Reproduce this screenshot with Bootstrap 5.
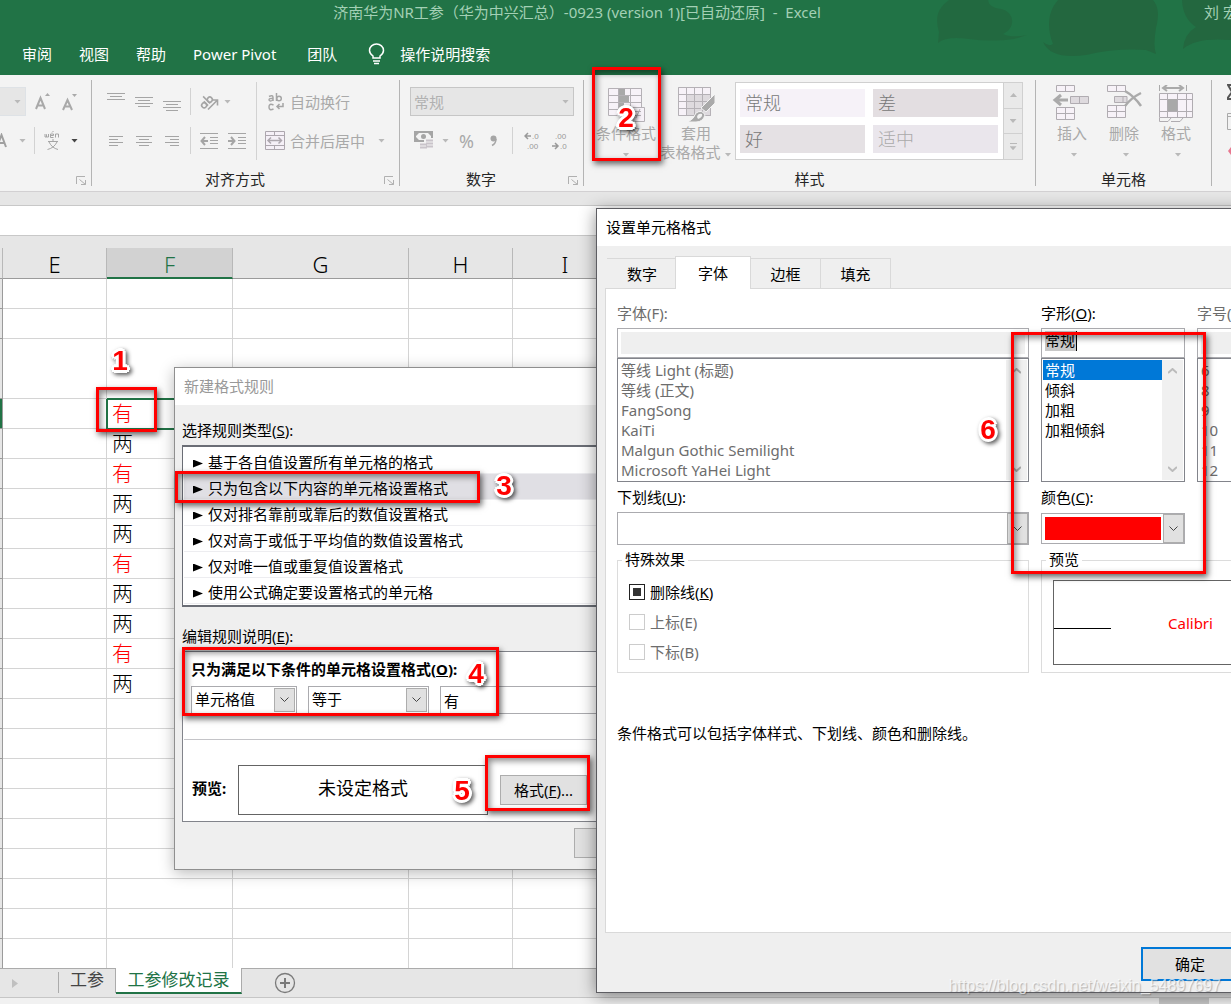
<!DOCTYPE html>
<html lang="zh-CN">
<head>
<meta charset="utf-8">
<meta name="viewport" content="width=device-width, initial-scale=1">
<title>Excel - 条件格式</title>
<link href="https://cdn.jsdelivr.net/npm/bootstrap@5.3.0/dist/css/bootstrap.min.css" rel="stylesheet">
<style>
body{font-family:"Noto Sans","Noto Sans CJK SC",sans-serif;font-size:15px;line-height:20px;color:#000;background:#e6e6e6}
.app{height:100vh;min-height:1004px;overflow:hidden}
button,input,select{font:inherit;color:inherit}
button{background:none;border:0;padding:0}
svg{display:block;flex:none}
/* title bar and ribbon tabs */
.top-bar{background:#217346;height:75px;color:#a3d0b5}
.top-art{right:0;top:0}
.title-row{height:24px}
.user-name{width:77px;padding-left:50px;white-space:pre;overflow:hidden}
.menu-row{height:51px;padding:12px 22px 4px;gap:27px}
.menu-row a,.menu-row button{color:#fff;text-decoration:none}
/* ribbon */
.ribbon{background:#f3f3f3;height:117px;border-bottom:1px solid #d2d0d2;color:#a9a9a9;padding:5px 0 5px}
.rgroup{border-right:1px solid #b4b4b4;padding-top:2px;flex:none}
.rgroup .glabel{color:#262626;height:13px;line-height:12px}
.rrow{height:39px}
.ib{width:28px;height:28px;display:flex;align-items:center;justify-content:center;flex:none}
.ib,.tb,.bb{color:inherit}
.vsep{width:1px;height:27px;background:#d2d2d2;flex:none}
.caret{width:7px;height:4px;background:#b9b9b9;clip-path:polygon(0 0,100% 0,50% 100%);flex:none;display:inline-block}
.caret.on{background:#444}
.numsel{width:164px;height:29px;border:1px solid #c6c6c6;background:#e6e6e6}
.numsel select{appearance:none;border:0;background:none;padding:0 3px;opacity:1;color:#b1b1b1}
.bb{width:52px;line-height:19px;padding-top:3px;display:flex;flex-direction:column;align-items:center;white-space:nowrap}
.bb svg{margin-bottom:1px}
.bb .cr{height:19px;display:flex;align-items:center;gap:4px}
.bb .caret{margin-top:4px}
.cellbtns .cr{padding-left:4px}
.gallery{background:#fff;border:1px solid #d0d0d0;width:288px;height:78px}
.gitems{display:grid;grid-template-columns:125px 125px;grid-auto-rows:28px;gap:8px;padding:6px 4px;width:267px}
.gitems button{text-align:left;padding-left:5px;font-size:18px;font-weight:300;color:#777}
.gscroll{width:19px;border-left:1px solid #d0d0d0;background:#e9e9e9}
.gscroll button{flex:1;display:flex;align-items:center;justify-content:center}
.gscroll button+button{border-top:1px solid #d0d0d0}
/* formula bar and grid */
.fbar{height:31px;margin-top:13px;background:#fff;border:1px solid #c8c8c8;border-width:1px 0;flex:none}
.sheet{table-layout:fixed;width:100%;margin-top:12px;border-collapse:separate;border-spacing:0;background:#fff;font-size:21px;font-weight:300}
.sheet th{height:31px;padding:2px 0 0;text-align:center;font-weight:300;font-size:22px;line-height:26px;background:#e6e6e6;border-right:1px solid #b8b8b8;border-bottom:1px solid #9b9b9b}
.sheet th.cur{background:#d2d2d2;color:#217346;border-bottom:2px solid #217346}
.sheet td{height:30px;padding:0 0 1px 5px;line-height:26px;border-right:1px solid #d4d4d4;border-bottom:1px solid #d4d4d4}
.sheet tr.tall td{height:60px}
.sheet td:first-child{background:#e6e6e6;border-color:#9b9b9b;padding:0}
.sheet tr.sel td:first-child{background:#217346}
.sheet tr.sel td.act{position:relative;box-shadow:-1px 0 #217346,inset 1px 0 #217346,0 -1px #217346,inset 0 1px #217346,0 1px #217346;color:#f00;border-bottom-color:#217346}
.sheet td.red{color:#f00}
.tabs-row{height:29px;border-top:1px solid #ababab;background:#e6e6e6;font-size:17px}
.tabs-row a{color:#444;text-decoration:none}
.tabs-row a.cur{color:#217346;background:#fff;width:126px;height:26px;margin-top:-1px;border-bottom:2px solid #217346;text-align:center;line-height:24px;border-right:1px solid #ababab}
.stat{height:7px;border-top:1px solid #c6c6c6;background:#f1f1f1}
/* windows */
.win{position:absolute;background:#efefef;border:1px solid #8f8f8f}
.win .cap{background:#fff;height:37px;padding:0 9px 2px;display:flex;align-items:center}
.rule-win{left:174px;top:367px;width:620px;height:503px;box-shadow:0 3px 14px rgba(0,0,0,.28)}
.cell-win{left:596px;top:208px;width:760px;height:785px;border-color:#5d5d62;box-shadow:0 3px 16px rgba(0,0,0,.45)}
.rule-body{padding:15px 8px 0 7px}
.rules{border:2px solid #6a6d75;border-right-width:1px;border-left-width:1px;background:#fff;padding:1px 1px 2px;height:162px}
.rules button{display:flex;align-items:center;gap:5px;height:26px;width:100%;padding:2px 0 0 9px;border-bottom:1px solid #ededf0;text-align:left}
.rules button.on{background:#e0dfe4}
.tri{width:10px;height:8px;margin-top:4px;background:#000;clip-path:polygon(0 0,100% 50%,0 100%)}
.desc{border:1px solid #82848b;background:#fff;height:171px}
.combo{display:flex;border:1px solid #ababaf;background:#fff;padding:1px}
.combo select{appearance:none;border:0;background:none;flex:1;min-width:0;padding:0 2px 2px;outline:0}
.arr{width:21px;background:#e1e1e1;border:1px solid #adadad;display:flex;align-items:center;justify-content:center;flex:none}
.line-in{border:1px solid #ababaf;background:#fff;padding:0 3px;border-radius:0}
.pv{border:1px solid #646464;background:#fff}
.wbtn{background:#e1e1e1;border:1px solid #adadad}
.ctabs{height:32px;padding-left:2px;display:flex;align-items:flex-end}
.ctabs button{height:30px;width:70px;border:1px solid #d9d9d9;border-width:1px 1px 0 0;padding-top:1px}
.ctabs button.on{background:#fff;width:76px;height:33px;border-left-width:1px;position:relative;margin-bottom:-1px;margin-left:-2px;padding-bottom:1px}
.ctabs button:first-child{border-right:0}
.cpage{border:1px solid #d9d9d9;background:#fff;height:645px;padding:14px 11px 0}
.cgrid{display:grid;grid-template-columns:412px 144px 300px;column-gap:12px}
.cgrid label.top-l{display:block;margin-bottom:5px}
.cgrid label.mid-l{display:block;margin:5px 0 5px}
.gray{color:#6d6d6d}
.dis-in{border:1px solid #ababaf;background:#efefef;box-shadow:inset 0 0 0 3px #fff;height:30px;width:100%;display:block;padding:0}
.edit-in{height:30px;width:100%;border:1px solid #ababaf;padding:0 3px;display:flex;background:#fff;line-height:25px}
.edit-in input{border:0;padding:0 0 2px;width:32px;height:20px;margin-top:2px;background:#c8c8c8;border-right:1px solid #000}
.lbox{border:1px solid #82848b;height:124px;display:flex;padding:1px}
.lbox ul{list-style:none;margin:0;padding:0;flex:1}
.lbox li{height:20px;padding-left:2px;white-space:nowrap}
.lbox li.on{background:#0078d7;color:#fff}
.sb{width:21px;background:#f0f0f0;display:flex;flex-direction:column;justify-content:space-between;align-items:center;padding:8px 0}
.fs{border:1px solid #dcdcdc;height:113px;margin-top:15px;position:relative}
.fs legend{position:absolute;left:4px;top:-12px;width:auto;margin:0;padding:0 3px;font-size:15px;line-height:20px;background:#fff;float:none}
.ck{display:flex;align-items:center;gap:5px;height:30px;padding-left:11px}
.ck input{appearance:none;width:16px;height:16px;border:1px solid #ccc;margin:0;background:#fff}
.ck input.mixed{border-color:#222;background:#333;box-shadow:inset 0 0 0 3px #fff}
/* annotations */
.ring{position:absolute;border:3px solid #f00;box-shadow:2px 3px 6px rgba(0,0,0,.6),inset 2px 3px 6px rgba(0,0,0,.45);pointer-events:none}
.num{position:absolute;width:30px;height:32px;text-align:center;font:bold 28px/32px "Liberation Sans",sans-serif;color:#f00;text-shadow:3px 0 #fff,-3px 0 #fff,0 3px #fff,0 -3px #fff,2px 2px #fff,-2px 2px #fff,2px -2px #fff,-2px -2px #fff;filter:drop-shadow(2px 2px 2px rgba(0,0,0,.65))}
.wmark{position:absolute;right:10px;bottom:8px;font:16px/20px "Liberation Sans",sans-serif;color:rgba(255,255,255,.7);text-shadow:1px 1px 1px rgba(0,0,0,.25)}
</style>
</head>
<body>
<div class="app position-relative d-flex flex-column">
<header class="top-bar position-relative flex-shrink-0">
  <svg class="top-art position-absolute" width="310" height="75" viewBox="0 0 310 75" fill="#23673f">
    <path opacity=".8" d="M28 0C14 10 15 21 18 32L17 43Q25 36 48 39T93 39L106 35Q90 38 82 34C95 28 94 12 80 9Q68 8 67 0Z"/>
    <path d="M137 0C125 14 127 30 132 44Q128 47 122 42Q130 60 165 55Q195 48 225 50L235 54Q232 46 235 28Q240 9 232 0Z"/>
    <path d="M261 0Q262 19 275 27Q263 34 262 49Q275 37 310 40V0Z"/>
  </svg>
  <div class="title-row d-flex align-items-center position-relative">
    <div class="flex-fill text-center" style="white-space:pre">济南华为NR工参（华为中兴汇总）-0923 (version 1)[已自动还原]  -  Excel</div>
    <div class="user-name">刘 宏</div>
  </div>
  <nav class="menu-row d-flex align-items-center position-relative">
    <a href="#">审阅</a><a href="#">视图</a><a href="#">帮助</a><a href="#" class="me-1">Power Pivot</a><a href="#">团队</a>
    <button class="d-flex align-items-center ms-1" style="gap:15px"><svg width="17" height="22" viewBox="0 0 17 22" fill="none" stroke="#fff" stroke-width="1.5"><path d="M5 15V13Q1.500 10.500 1.500 7.500A7 6.500 0 0 1 15.500 7.500Q15.500 10.500 12 13V15ZM5 18H12M6 20.500H11"/></svg>操作说明搜索</button>
  </nav>
</header>

<section class="ribbon d-flex flex-shrink-0">
  <div class="rgroup d-flex flex-column" style="width:92px">
    <div class="rrow d-flex align-items-center">
      <button class="border border-start-0 d-flex align-items-center justify-content-end pe-1" style="width:26px;height:29px;background:#e6e6e6"><i class="caret"></i></button>
      <button class="ib ms-1"><svg width="20" height="20" viewBox="0 0 20 20" fill="none" stroke="#a9a9a9" stroke-width="2"><path d="M2 17L6.500 6L11 17M3.500 13.500H9.500"/><path d="M11 4L13.500 1L16 4Z" fill="#a9a9a9" stroke="none"/></svg></button>
      <button class="ib"><svg width="20" height="20" viewBox="0 0 20 20" fill="none" stroke="#a9a9a9" stroke-width="2"><path d="M1 18L5.500 8L10 18M2.500 14.500H8.500"/><path d="M10 2L12.500 5L15 2Z" fill="#a9a9a9" stroke="none"/></svg></button>
    </div>
    <div class="rrow d-flex align-items-center">
      <svg width="7" height="16" viewBox="0 0 7 16" fill="none" stroke="#a0a0a0" stroke-width="2"><path d="M-3 14L1.500 2L6 14M-2 10H5"/></svg>
      <i class="caret" style="margin-left:12px"></i><i class="vsep" style="margin-left:8px"></i>
      <button class="ib"  style="margin-left:4px"><svg width="18" height="20" viewBox="0 0 18 20" fill="none" stroke="#a5a5a5"><path d="M1 3V6H2.500V3.500V6H4.500V3M6.500 4.500H9.500V3H6.500V6.500H9.500M8 1.500L9.500 0M11.500 6.500V3H14.500V6.500M4 10.500H14M9 8V10.500M5 11Q8 17 14 18.500M13 11Q10 17 3.500 18.500"/></svg></button>
      <i class="caret on ms-1"></i>
    </div>
    <div class="mt-auto d-flex justify-content-end pe-1"><button aria-label="字体设置"><svg width="11" height="11" viewBox="0 0 11 11" fill="none" stroke="#b0b0b0"><path d="M.500 9V1.500H9M3.500 4.500L9.500 9.500M9.500 5V9.500H5"/></svg></button></div>
  </div>

  <div class="rgroup d-flex flex-column" style="width:308px">
    <div class="d-flex">
      <div style="width:165px;padding-left:10px;flex:none;border-right:1px solid #d2d2d2">
        <div class="rrow d-flex align-items-center">
          <button class="ib"><svg width="18" height="18" viewBox="0 0 18 18" stroke="#a5a5a5"><path d="M0 .500H18M3 3.500H15M0 6.500H18"/></svg></button>
          <button class="ib"><svg width="18" height="18" viewBox="0 0 18 18" stroke="#a5a5a5"><path d="M0 4.500H18M3 7.500H15M0 10.500H18M3 13.500H15"/></svg></button>
          <button class="ib"><svg width="18" height="18" viewBox="0 0 18 18" stroke="#a5a5a5"><path d="M0 8.500H18M3 11.500H15M0 14.500H18M3 17.500H15"/></svg></button>
          <i class="vsep mx-1"></i>
          <button class="d-flex align-items-center ms-1"><svg width="21" height="20" viewBox="0 0 21 20" fill="none" stroke="#a5a5a5" stroke-width="1.600"><path d="M9 17.500L18 8.500M13 8H18.500V13.500"/><g transform="rotate(-45 8 9)"><circle cx="3" cy="10" r="2.500"/><path d="M5.500 7V13M8.500 3V13"/><circle cx="11" cy="10" r="2.500"/></g></svg><i class="caret ms-1"></i></button>
        </div>
        <div class="rrow d-flex align-items-center">
          <button class="ib"><svg width="14" height="14" viewBox="0 0 14 14" stroke="#a5a5a5"><path d="M0 2.500H14M0 5.500H9M0 8.500H14M0 11.500H9"/></svg></button>
          <button class="ib"><svg width="16" height="14" viewBox="0 0 16 14" stroke="#a5a5a5"><path d="M0 2.500H16M3 5.500H13M0 8.500H16M3 11.500H13"/></svg></button>
          <button class="ib"><svg width="14" height="14" viewBox="0 0 14 14" stroke="#a5a5a5"><path d="M0 2.500H14M5 5.500H14M0 8.500H14M5 11.500H14"/></svg></button>
          <i class="vsep mx-1"></i>
          <button class="ib"><svg width="18" height="16" viewBox="0 0 18 16" stroke="#a5a5a5" fill="none"><path d="M0 .500H18M10 4.500H18M10 7.500H18M10 10.500H18M0 15.500H18"/><path d="M1.500 8H8M5 4L1.500 8L5 12" stroke-width="2"/></svg></button>
          <button class="ib"><svg width="18" height="16" viewBox="0 0 18 16" stroke="#a5a5a5" fill="none"><path d="M0 .500H18M10 4.500H18M10 7.500H18M10 10.500H18M0 15.500H18"/><path d="M0 8H6.500M3 4L6.500 8L3 12" stroke-width="2"/></svg></button>
        </div>
      </div>
      <div class="ps-2">
        <div class="rrow d-flex align-items-center"><button class="tb d-flex align-items-center" style="gap:6px;padding-left:3px"><svg width="16" height="18" viewBox="0 0 16 18" fill="none" stroke="#a5a5a5" stroke-width="1.500"><path d="M1 3.500Q5 1.500 5 4.500V8M5 5.500Q1 5 1 7Q2 9 5 7M8.500 0V8"/><circle cx="11" cy="5.500" r="2.300"/><path d="M5.500 12Q1 10 1 14Q1 18 5.500 16M15 10V13.500H9M11.500 11L9 13.500L11.500 16"/></svg>自动换行</button></div>
        <div class="rrow d-flex align-items-center"><button class="tb d-flex align-items-center" style="gap:5px"><svg width="20" height="19" viewBox="0 0 20 19" fill="#f5f0f7" stroke="#ada7ae"><path d="M.500 .500H19.500V18.500H.500ZM.500 4.500H19.500M.500 14.500H19.500M9.500 .500V4.500M9.500 14.500V18.500"/><path fill="none" stroke-width="1.500" d="M3 9.500H16M6 6.500L3 9.500L6 12.500M13.500 6.500L16.500 9.500L13.500 12.500"/></svg>合并后居中<i class="caret ms-2"></i></button></div>
      </div>
    </div>
    <div class="mt-auto d-flex align-items-end"><div class="glabel flex-fill text-center">对齐方式</div><button class="pe-1" aria-label="对齐设置" style="padding-left:6px"><svg width="11" height="11" viewBox="0 0 11 11" fill="none" stroke="#b0b0b0"><path d="M.500 9V1.500H9M3.500 4.500L9.500 9.500M9.500 5V9.500H5"/></svg></button></div>
  </div>

  <div class="rgroup d-flex flex-column" style="width:184px">
    <div class="rrow d-flex align-items-center" style="padding-left:10px">
      <div class="numsel d-flex align-items-center pe-1"><select class="flex-fill" disabled aria-label="数字格式"><option>常规</option></select><i class="caret"></i></div>
    </div>
    <div class="rrow d-flex align-items-center" style="padding-left:14px">
      <svg width="20" height="19" viewBox="0 0 20 19"><path fill="#a5a5a5" fill-rule="evenodd" d="M0 0H19V7H16V3H3V8H10V11H0Z"/><path d="M2 2H17V9H2Z" fill="#f3f3f3"/><path d="M2 2H5L2 5ZM17 2H14L17 5ZM2 9H5L2 6Z" fill="#a5a5a5"/><circle cx="9.500" cy="5.500" r="2.500" fill="#a5a5a5"/><path d="M12 9.500H19M12 12.500H19M12 15.500H19M6 13.500H13M6 16.500H13" stroke="#c9c4ca" stroke-width="2"/></svg>
      <i class="caret" style="margin-left:8px"></i>
      <button style="font-size:18px;margin-left:10px">%</button>
      <button style="margin-left:16px" aria-label="千位分隔"><svg width="7" height="12" viewBox="0 0 7 12"><circle cx="3.500" cy="3.500" r="3" fill="#a5a5a5"/><path d="M6 4Q6 8.500 2 10.500" fill="none" stroke="#a5a5a5" stroke-width="1.500"/></svg></button>
      <i class="vsep" style="margin-left:15px"></i>
      <button style="margin-left:11px" aria-label="增加小数位"><svg width="18" height="20" viewBox="0 0 18 20" fill="#999" font-family="Liberation Sans" font-size="8"><text x="8" y="8">.0</text><text x="3" y="18">.00</text><path d="M1 5H7M4 2L1 5L4 8" fill="none" stroke="#999" stroke-width="1.500"/></svg></button>
      <button style="margin-left:10px" aria-label="减少小数位"><svg width="18" height="20" viewBox="0 0 18 20" fill="#999" font-family="Liberation Sans" font-size="8"><text x="3" y="8">.00</text><text x="8" y="18">.0</text><path d="M0 15H6M3 12L6 15L3 18" fill="none" stroke="#999" stroke-width="1.500"/></svg></button>
    </div>
    <div class="mt-auto d-flex align-items-end"><div class="glabel flex-fill text-center">数字</div><button class="pe-1" aria-label="数字设置" style="padding-left:6px"><svg width="11" height="11" viewBox="0 0 11 11" fill="none" stroke="#b0b0b0"><path d="M.500 9V1.500H9M3.500 4.500L9.500 9.500M9.500 5V9.500H5"/></svg></button></div>
  </div>

  <div class="rgroup d-flex flex-column" style="width:452px">
    <div class="d-flex align-items-start">
      <button class="bb" style="width:62px;margin-left:11px"><svg width="38" height="38" viewBox="0 0 38 38" fill="#f7f2f8" stroke="#b5b1b6"><path d="M1.500 3.500H34.500V30.500H1.500ZM1.500 10.500H34.500M1.500 17.500H34.500M1.500 24.500H34.500M11.500 3.500V30.500M23.500 3.500V30.500"/><path d="M12 4H18V10H12ZM12 11H22V17H12ZM12 18H17V24H12Z" fill="#a9a9a9" stroke="none"/><path d="M18.500 22.500H37.500V36.500H18.500ZM28 26.500H34M28 30.500H34M33 24L29 33"/></svg>条件格式<span class="cr"><i class="caret"></i></span></button>
      <button class="bb" style="width:78px"><svg width="38" height="38" viewBox="0 0 38 38" fill="#f7f2f8" stroke="#b5b1b6"><path d="M1.500 2.500H33.500V30.500H1.500Z"/><path d="M9 9H33V30H9Z" fill="#dedade" stroke="none"/><path fill="none" d="M1.500 2.500H33.500V30.500H1.500M1.500 9.500H33.500M1.500 16.500H33.500M1.500 23.500H33.500M9.500 2.500V30.500M17.500 2.500V30.500M25.500 2.500V30.500"/><path fill="#aaa" stroke="#f3f3f3" d="M38 9V18L29 27L24 23ZM11 37Q17 34 19 28Q25 24 28 30Q26 37 19 37Z"/><path fill="#f3f3f3" d="M20 32Q21 28 25 29Q26 32 21 34Z" stroke="none"/></svg>套用<span class="cr">表格格式<i class="caret"></i></span></button>
      <div class="gallery d-flex">
        <div class="gitems"><button style="background:#f6f2f8">常规</button><button style="background:#e3dee1">差</button><button style="background:#e5e1e4">好</button><button style="background:#eae6ec;color:#aaa">适中</button></div>
        <div class="gscroll d-flex flex-column"><button aria-label="上"><i class="caret" style="transform:rotate(180deg)"></i></button><button aria-label="下"><i class="caret"></i></button><button class="flex-column" aria-label="更多"><i style="width:7px;height:1px;background:#b9b9b9;margin-bottom:2px"></i><i class="caret"></i></button></div>
      </div>
    </div>
    <div class="glabel mt-auto text-center">样式</div>
  </div>

  <div class="rgroup d-flex flex-column" style="width:176px">
    <div class="d-flex cellbtns" style="padding-left:10px">
      <button class="bb"><svg width="38" height="38" viewBox="2 0 38 38" overflow="visible" fill="#f7f2f8" stroke="#b0acb1"><path d="M5.500 .500H23.500V6.500H5.500ZM14.500 .500V6.500M5.500 22.500H23.500V34.500H5.500ZM5.500 28.500H23.500M14.500 22.500V34.500"/><path fill="#dedade" d="M19.500 11.500H37.500V18.500H19.500ZM28.500 11.500V18.500"/><path fill="none" stroke="#aaa" stroke-width="3" d="M4 15H17M10 10L4 15L10 20"/></svg>插入<span class="cr"><i class="caret"></i></span></button>
      <button class="bb"><svg width="38" height="38" viewBox="2 0 38 38" overflow="visible" fill="#f7f2f8" stroke="#b0acb1"><path d="M4.500 .500H22.500V6.500H4.500ZM13.500 .500V6.500M4.500 20.500H22.500V32.500H4.500ZM4.500 26.500H22.500M13.500 20.500V32.500"/><path fill="#dedade" d="M11.500 11.500H24V17.500H11.500ZM20 11.500V17.500"/><path fill="none" stroke="#aaa" stroke-width="2.500" d="M22 6Q31 11 38 21M38 8Q28 13 22 21"/></svg>删除<span class="cr"><i class="caret"></i></span></button>
      <button class="bb"><svg width="38" height="38" viewBox="0 0 38 38" fill="#f7f2f8" stroke="#b0acb1"><path d="M2.500 8.500H35.500V32.500H2.500ZM2.500 14.500H35.500M2.500 26.500H35.500M10.500 8.500V32.500M20.500 8.500V32.500M29.500 8.500V32.500"/><path fill="none" d="M2.500 33V36.500H11L14 33M14 36.500H23L26 33"/><path d="M11 14H20V26H11Z" fill="#a9a9a9" stroke="none"/><path fill="none" stroke="#aaa" d="M2.500 0V6M29.500 0V6"/><path fill="none" stroke="#aaa" stroke-width="2" d="M6 3H26M10 0L6 3L10 6M22 0L26 3L22 6"/></svg>格式<span class="cr"><i class="caret"></i></span></button>
    </div>
    <div class="glabel mt-auto text-center">单元格</div>
  </div>
  <div class="d-flex flex-column flex-fill align-items-end" style="padding-top:4px;gap:12px;min-width:0">
    <svg width="4" height="17" viewBox="0 0 4 17" fill="none" stroke="#555" stroke-width="2"><path d="M4 1H1L5 8L0 15H4"/></svg>
    <svg width="4" height="17" viewBox="0 0 4 17" fill="none" stroke="#aaa"><path d="M4 .500H.500V16.500H4M0 3.500H4"/></svg>
    <svg width="3" height="17" viewBox="0 0 3 17" fill="#e8778f"><path d="M3 5L0 9L3 13Z"/></svg>
  </div>
</section>

<div class="fbar"></div>

<main class="flex-fill" style="min-height:0">
<table class="sheet">
  <colgroup><col style="width:3px"><col style="width:104px"><col style="width:126px"><col style="width:176px"><col style="width:104px"><col style="width:105px"><col></colgroup>
  <thead><tr><th></th><th>E</th><th class="cur">F</th><th>G</th><th>H</th><th>I</th><th></th></tr></thead>
  <tbody>
  <tr><td></td><td></td><td></td><td></td><td></td><td></td><td></td></tr>
  <tr><td></td><td></td><td></td><td></td><td></td><td></td><td></td></tr>
  <tr class="tall"><td></td><td></td><td></td><td></td><td></td><td></td><td></td></tr>
  <tr class="sel"><td></td><td></td><td class="act">有</td><td></td><td></td><td></td><td></td></tr>
  <tr><td></td><td></td><td>两</td><td></td><td></td><td></td><td></td></tr>
  <tr><td></td><td></td><td class="red">有</td><td></td><td></td><td></td><td></td></tr>
  <tr><td></td><td></td><td>两</td><td></td><td></td><td></td><td></td></tr>
  <tr><td></td><td></td><td>两</td><td></td><td></td><td></td><td></td></tr>
  <tr><td></td><td></td><td class="red">有</td><td></td><td></td><td></td><td></td></tr>
  <tr><td></td><td></td><td>两</td><td></td><td></td><td></td><td></td></tr>
  <tr><td></td><td></td><td>两</td><td></td><td></td><td></td><td></td></tr>
  <tr><td></td><td></td><td class="red">有</td><td></td><td></td><td></td><td></td></tr>
  <tr><td></td><td></td><td>两</td><td></td><td></td><td></td><td></td></tr>
  <tr><td></td><td></td><td></td><td></td><td></td><td></td><td></td></tr>
  <tr><td></td><td></td><td></td><td></td><td></td><td></td><td></td></tr>
  <tr><td></td><td></td><td></td><td></td><td></td><td></td><td></td></tr>
  <tr><td></td><td></td><td></td><td></td><td></td><td></td><td></td></tr>
  <tr><td></td><td></td><td></td><td></td><td></td><td></td><td></td></tr>
  <tr><td></td><td></td><td></td><td></td><td></td><td></td><td></td></tr>
  <tr><td></td><td></td><td></td><td></td><td></td><td></td><td></td></tr>
  <tr><td></td><td></td><td></td><td></td><td></td><td></td><td></td></tr>
  <tr><td></td><td></td><td></td><td></td><td></td><td></td><td></td></tr>
  </tbody>
</table>
</main>

<footer class="flex-shrink-0 position-relative">
  <nav class="tabs-row d-flex">
    <div class="d-flex align-items-center" style="width:58px;padding-left:12px"><svg width="6" height="9" viewBox="0 0 6 9" fill="#c0c0c0"><path d="M0 0L6 4.500L0 9Z"/></svg></div>
    <i style="width:1px;height:21px;margin-top:3px;background:#ababab"></i>
    <a href="#" class="text-center" style="width:57px;line-height:22px;border-right:1px solid #ababab;height:24px">工参</a>
    <a href="#" class="cur">工参修改记录</a>
    <button aria-label="新工作表" style="margin-left:32px"><svg width="22" height="22" viewBox="0 0 22 22" fill="none" stroke="#7a7a7a"><circle cx="11" cy="11" r="9.500" stroke-width="1.300"/><path d="M6 11H16M11 6V16" stroke-width="2"/></svg></button>
  </nav>
  <div class="stat d-flex justify-content-end"><i style="width:50px;background:#c9c9c9;margin-right:22px"></i></div>
</footer>

<section class="win rule-win" aria-label="新建格式规则">
  <div class="cap" style="color:#999">新建格式规则</div>
  <div class="rule-body">
    <div>选择规则类型(<u>S</u>):</div>
    <div class="rules" style="margin-top:5px">
      <button><i class="tri"></i>基于各自值设置所有单元格的格式</button>
      <button class="on"><i class="tri"></i>只为包含以下内容的单元格设置格式</button>
      <button><i class="tri"></i>仅对排名靠前或靠后的数值设置格式</button>
      <button><i class="tri"></i>仅对高于或低于平均值的数值设置格式</button>
      <button><i class="tri"></i>仅对唯一值或重复值设置格式</button>
      <button><i class="tri"></i>使用公式确定要设置格式的单元格</button>
    </div>
    <div style="margin-top:19px">编辑规则说明(<u>E</u>):</div>
    <div class="desc d-flex flex-column" style="margin-top:5px">
      <div style="padding:7px 0 0 8px">
        <div class="fw-bold">只为满足以下条件的单元格设置格式(<u>O</u>):</div>
        <div class="d-flex" style="gap:11px;margin-top:7px">
          <div class="combo" style="width:106px;height:28px"><select aria-label="对象"><option>单元格值</option></select><span class="arr"><svg width="9" height="6" viewBox="0 0 9 6" fill="none" stroke="#444"><path d="M.500 .500L4.500 4.500L8.500 .500"/></svg></span></div>
          <div class="combo" style="width:121px;height:28px"><select aria-label="比较"><option>等于</option></select><span class="arr"><svg width="9" height="6" viewBox="0 0 9 6" fill="none" stroke="#444"><path d="M.500 .500L4.500 4.500L8.500 .500"/></svg></span></div>
          <input class="line-in" style="width:300px;height:28px" value="有" aria-label="值">
        </div>
      </div>
      <div style="border-top:1px solid #c4c4c8;margin:25px 1px 0"></div>
      <div class="d-flex align-items-center" style="padding:25px 0 0 9px">
        <div class="fw-bold pb-1" style="width:46px">预览:</div>
        <div class="pv d-flex align-items-center justify-content-center pb-1" style="width:250px;height:50px;font-size:18px">未设定格式</div>
        <button class="wbtn" style="width:87px;height:30px;margin-left:12px">格式(<u>F</u>)...</button>
      </div>
    </div>
    <button class="wbtn" style="width:98px;height:30px;margin:6px 0 0 392px" aria-label="确定"></button>
  </div>
</section>

<section class="win cell-win" aria-label="设置单元格格式">
  <div class="cap">设置单元格格式</div>
  <div style="padding:10px 8px 0">
    <div class="ctabs"><button>数字</button><button class="on">字体</button><button>边框</button><button>填充</button></div>
    <div class="cpage">
      <div class="cgrid">
        <div>
          <label class="gray top-l" for="fn">字体(F):</label>
          <input id="fn" class="dis-in" disabled>
          <div class="lbox gray"><ul><li>等线 Light (标题)</li><li>等线 (正文)</li><li>FangSong</li><li>KaiTi</li><li>Malgun Gothic Semilight</li><li>Microsoft YaHei Light</li></ul><div class="sb"><svg width="9" height="6" viewBox="0 0 9 6" fill="none" stroke="#aaa" stroke-width="2"><path d="M0 5L4.500 1L9 5"/></svg><svg width="9" height="6" viewBox="0 0 9 6" fill="none" stroke="#aaa" stroke-width="2"><path d="M0 1L4.500 5L9 1"/></svg></div></div>
          <label class="mid-l" for="ul">下划线(<u>U</u>):</label>
          <div class="combo p-0" style="height:33px"><select id="ul"><option></option></select><span class="arr"><svg width="9" height="6" viewBox="0 0 9 6" fill="none" stroke="#444"><path d="M.500 .500L4.500 4.500L8.500 .500"/></svg></span></div>
          <fieldset class="fs" style="padding-top:16px"><legend>特殊效果</legend>
            <label class="ck"><input type="checkbox" class="mixed"><span>删除线(<u>K</u>)</span></label>
            <label class="ck gray"><input type="checkbox" disabled>上标(E)</label>
            <label class="ck gray"><input type="checkbox" disabled>下标(B)</label>
          </fieldset>
        </div>
        <div>
          <label class="top-l" for="fst">字形(<u>O</u>):</label>
          <div class="edit-in"><input id="fst" value="常规"></div>
          <div class="lbox"><ul><li class="on">常规</li><li>倾斜</li><li>加粗</li><li>加粗倾斜</li></ul><div class="sb"><svg width="9" height="6" viewBox="0 0 9 6" fill="none" stroke="#bbb" stroke-width="2"><path d="M0 5L4.500 1L9 5"/></svg><svg width="9" height="6" viewBox="0 0 9 6" fill="none" stroke="#bbb" stroke-width="2"><path d="M0 1L4.500 5L9 1"/></svg></div></div>
          <label class="mid-l" for="col">颜色(<u>C</u>):</label>
          <div class="combo p-0" style="height:31px;margin-top:6px"><div style="flex:1;display:flex;padding:3px 2px 3px 3px"><select id="col" style="background:#f00"><option></option></select></div><span class="arr"><svg width="9" height="6" viewBox="0 0 9 6" fill="none" stroke="#444"><path d="M.500 .500L4.500 4.500L8.500 .500"/></svg></span></div>
          <fieldset class="fs" style="width:420px;margin-top:16px;padding:19px 11px 0"><legend>预览</legend>
            <div class="pv d-flex align-items-center" style="height:85px"><i style="width:57px;height:1px;background:#000;margin-top:12px"></i><span style="color:#f00;margin-left:57px">Calibri</span></div>
          </fieldset>
        </div>
        <div class="gray">
          <label class="top-l" for="sz">字号(S):</label>
          <input id="sz" class="dis-in" disabled>
          <div class="lbox"><ul><li>6</li><li>8</li><li>9</li><li>10</li><li>11</li><li>12</li></ul></div>
        </div>
      </div>
      <div style="margin-top:50px">条件格式可以包括字体样式、下划线、颜色和删除线。</div>
    </div>
    <button class="d-block" style="width:98px;height:34px;margin:14px 0 0 536px;background:#e1e1e1;border:2px solid #0078d7">确定</button>
  </div>
</section>

<i class="ring" style="left:96px;top:387px;width:61px;height:45px"></i>
<i class="ring" style="left:592px;top:67px;width:69px;height:94px"></i>
<i class="ring" style="left:175px;top:471px;width:305px;height:32px"></i>
<i class="ring" style="left:182px;top:647px;width:317px;height:69px"></i>
<i class="ring" style="left:485px;top:755px;width:105px;height:56px"></i>
<i class="ring" style="left:1011px;top:332px;width:195px;height:242px"></i>
<span class="num" style="left:105px;top:345px">1</span>
<span class="num" style="left:611px;top:102px">2</span>
<span class="num" style="left:489px;top:470px">3</span>
<span class="num" style="left:461px;top:658px">4</span>
<span class="num" style="left:447px;top:775px">5</span>
<span class="num" style="left:973px;top:414px">6</span>
<div class="wmark">https://blog.csdn.net/weixin_54897697</div>
</div>
<script src="https://cdn.jsdelivr.net/npm/bootstrap@5.3.0/dist/js/bootstrap.bundle.min.js"></script>
</body>
</html>
